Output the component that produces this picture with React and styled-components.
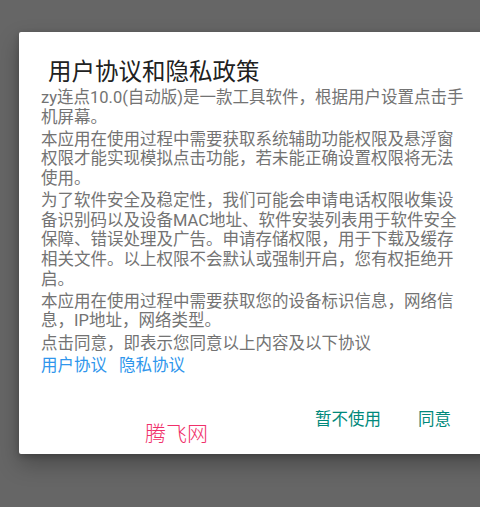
import React from 'react';
import styled, { createGlobalStyle } from 'styled-components';

const Global = createGlobalStyle`
  html, body {
    margin: 0;
    padding: 0;
    background: #666666;
    overflow: hidden;
  }
  body {
    width: 480px;
    height: 507px;
    font-family: Roboto, "Noto Sans CJK SC", sans-serif;
  }
`;

const Screen = styled.div`
  width: 480px;
  height: 507px;
  padding: 32px 0 0 19px;
  box-sizing: border-box;
`;

const Dialog = styled.div`
  position: relative;
  width: 480px;
  height: 422px;
  background: #ffffff;
  border-radius: 2px;
  box-shadow: 0 10px 22px rgba(0, 0, 0, 0.28), 0 2px 6px rgba(0, 0, 0, 0.2);
  display: flex;
  flex-direction: column;
  box-sizing: border-box;
  padding-top: 25px;
`;

const Title = styled.h2`
  margin: 0;
  padding-left: 29px;
  font-size: 23.5px;
  line-height: 30px;
  font-weight: 400;
  color: #212121;
`;

const Body = styled.div`
  margin-top: 1px;
  padding-left: 22px;
  width: 425px;
  font-size: 16.5px;
  line-height: 19.6px;
  color: #737373;
  word-break: break-all;
`;

const Para = styled.p`
  margin: 0 0 2.6px;
`;

const Links = styled.div`
  display: flex;
  gap: 12px;
`;

const Link = styled.a`
  color: #2f96ec;
  text-decoration: none;
  cursor: pointer;
`;

const Actions = styled.div`
  margin-top: auto;
  margin-bottom: 18px;
  height: 36px;
  display: flex;
  justify-content: flex-end;
  align-items: center;
  gap: 21px;
  padding-right: 40px;
`;

const ActionButton = styled.button`
  border: none;
  background: none;
  padding: 0 8px;
  height: 36px;
  font-family: inherit;
  font-size: 16.5px;
  color: #00897b;
  cursor: pointer;
`;

const Watermark = styled.div`
  position: absolute;
  left: 126px;
  top: 392px;
  font-size: 21px;
  line-height: 21px;
  font-weight: 300;
  color: #f0306a;
  pointer-events: none;
`;

// each paragraph is a list of forced lines (the first one wraps after 手 on the device)
const paragraphs = [
  ['zy连点10.0(自动版)是一款工具软件，根据用户设置点击手', '机屏幕。'],
  ['本应用在使用过程中需要获取系统辅助功能权限及悬浮窗权限才能实现模拟点击功能，若未能正确设置权限将无法使用。'],
  ['为了软件安全及稳定性，我们可能会申请电话权限收集设备识别码以及设备MAC地址、软件安装列表用于软件安全保障、错误处理及广告。申请存储权限，用于下载及缓存相关文件。以上权限不会默认或强制开启，您有权拒绝开启。'],
  ['本应用在使用过程中需要获取您的设备标识信息，网络信息，IP地址，网络类型。'],
  ['点击同意，即表示您同意以上内容及以下协议'],
];

export default function App() {
  return (
    <Screen>
      <Global />
      <Dialog>
        <Title>用户协议和隐私政策</Title>
        <Body>
          {paragraphs.map((lines) => (
            <Para key={lines[0]}>
              {lines.map((l, i) => (
                <React.Fragment key={i}>
                  {i > 0 && <br />}
                  {l}
                </React.Fragment>
              ))}
            </Para>
          ))}
          <Links>
            <Link>用户协议</Link>
            <Link>隐私协议</Link>
          </Links>
        </Body>
        <Actions>
          <ActionButton>暂不使用</ActionButton>
          <ActionButton>同意</ActionButton>
        </Actions>
        <Watermark>腾飞网</Watermark>
      </Dialog>
    </Screen>
  );
}
